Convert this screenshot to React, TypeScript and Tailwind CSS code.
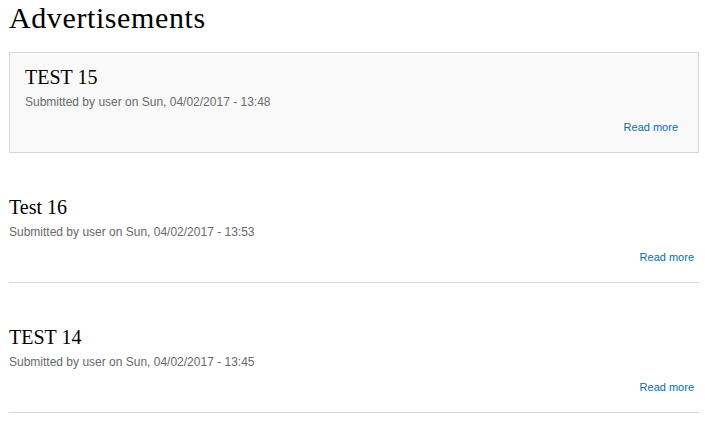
const NODES = [
  { title: 'TEST 15', date: 'Sun, 04/02/2017 - 13:48', sticky: true },
  { title: 'Test 16', date: 'Sun, 04/02/2017 - 13:53', sticky: false },
  { title: 'TEST 14', date: 'Sun, 04/02/2017 - 13:45', sticky: false },
];

function NodeTeaser({ title, date, sticky }: { title: string; date: string; sticky: boolean }) {
  return (
    <article
      className={
        sticky
          ? 'border border-[#d3d7d9] bg-[#f9f9f9] px-[15px] pt-[12px] pb-[17px]'
          : 'border-b border-[#d3d7d9] pb-[17px]'
      }
    >
      <h2 className="font-['Liberation_Serif',serif] text-[20px] leading-[24px] text-black">
        <a href="#">{title}</a>
      </h2>
      <div className="mt-[5px] text-[12px] leading-[16px] text-[#68696b]">
        Submitted by <span>user</span> on {date}
      </div>
      <ul className="mt-[9px] flex justify-end pr-[5px] text-[11px] leading-[16px]">
        <li>
          <a href="#" className="text-[#0071b3]">
            Read more
          </a>
        </li>
      </ul>
    </article>
  );
}

export default function App() {
  return (
    <div className="min-h-screen bg-white pl-[9px] pr-[6px] font-['Liberation_Sans',Arial,sans-serif]">
      <h1 className="mb-[16px] font-['Liberation_Serif',serif] text-[30px] font-normal leading-[36px] tracking-[0.6px] text-black">
        Advertisements
      </h1>
      <div className="flex flex-col gap-[42px]">
        {NODES.map((n) => (
          <NodeTeaser key={n.title} {...n} />
        ))}
      </div>
    </div>
  );
}
